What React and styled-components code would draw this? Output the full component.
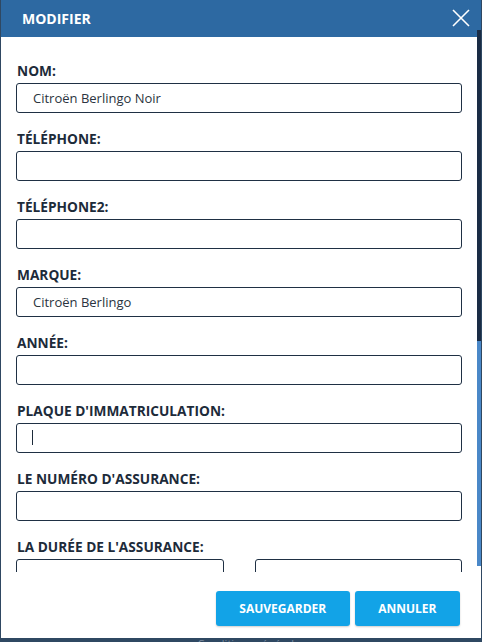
import React from "react";
import styled, { createGlobalStyle } from "styled-components";

const fields = [
  { label: "NOM:", value: "Citroën Berlingo Noir" },
  { label: "TÉLÉPHONE:", value: "" },
  { label: "TÉLÉPHONE2:", value: "" },
  { label: "MARQUE:", value: "Citroën Berlingo" },
  { label: "ANNÉE:", value: "" },
  { label: "PLAQUE D'IMMATRICULATION:", value: "", caret: true },
  { label: "LE NUMÉRO D'ASSURANCE:", value: "" },
];

const extraFields = ["KILOMÉTRAGE:", "COULEUR:", "CARBURANT:", "REMARQUE:"];

const App = () => {
  return (
    <>
      <GlobalStyle />
      <Page>
        <Modal>
          <Header>
            <Title>MODIFIER</Title>
            <CloseButton aria-label="close">
              <svg width="18" height="18" viewBox="0 0 18 18">
                <path d="M1 1L17 17M17 1L1 17" stroke="#fff" strokeWidth="1.6" fill="none" />
              </svg>
            </CloseButton>
          </Header>
          <BodyWrap>
            <Body>
              {fields.map((f) => (
                <Group key={f.label}>
                  <Label>{f.label}</Label>
                  <InputWrap>
                    <Input readOnly value={f.value} />
                    {f.caret && <Caret />}
                  </InputWrap>
                </Group>
              ))}
              <Group>
                <Label>LA DURÉE DE L'ASSURANCE:</Label>
                <Pair>
                  <Input readOnly value="" />
                  <Input readOnly value="" />
                </Pair>
              </Group>
              {extraFields.map((l) => (
                <Group key={l}>
                  <Label>{l}</Label>
                  <Input readOnly value="" />
                </Group>
              ))}
            </Body>
            <ScrollTrack>
              <ScrollThumb style={{ height: "58%" }} />
            </ScrollTrack>
          </BodyWrap>
          <Footer>
            <Button>SAUVEGARDER</Button>
            <Button>ANNULER</Button>
          </Footer>
        </Modal>
        <Backdrop>Conditions générales</Backdrop>
      </Page>
    </>
  );
};

const GlobalStyle = createGlobalStyle`
  html, body {
    margin: 0;
    padding: 0;
    background: #2f4862;
    font-family: "Open Sans", "Liberation Sans", sans-serif;
  }
  * { box-sizing: border-box; }
`;

const Page = styled.div`
  width: 482px;
  height: 642px;
  overflow: hidden;
  background: #2f4862;
  padding-left: 1px;
`;

const Modal = styled.div`
  width: 480px;
  height: 638px;
  display: flex;
  flex-direction: column;
  background: #fff;
`;

const Header = styled.div`
  height: 37px;
  flex-shrink: 0;
  background: #2d69a2;
  display: flex;
  align-items: center;
  justify-content: space-between;
  padding: 0 11px 0 21px;
`;

const Title = styled.div`
  color: #fff;
  font-weight: 700;
  font-size: 14px;
`;

const CloseButton = styled.div`
  width: 18px;
  height: 18px;
  display: flex;
  margin-top: -1px;
`;

const BodyWrap = styled.div`
  position: relative;
  flex: 1;
  min-height: 0;
`;

const Body = styled.div`
  height: 100%;
  overflow: hidden;
  padding: 25px 19px 0 15px;
`;

const ScrollTrack = styled.div`
  position: absolute;
  top: -7px;
  right: 0;
  bottom: 6px;
  width: 4px;
  background: #4a88c8;
`;

const ScrollThumb = styled.div`
  width: 100%;
  background: #1a2c45;
`;

const Group = styled.div`
  margin-bottom: 17px;
`;

const Label = styled.div`
  font-weight: 700;
  font-size: 13.7px;
  line-height: 18px;
  color: #1d2b3a;
  margin: 0 0 3px 1px;
`;

const InputWrap = styled.div`
  position: relative;
`;

const Input = styled.input`
  display: block;
  width: 100%;
  height: 30px;
  border: 1px solid #1f3044;
  border-radius: 3px;
  padding: 0 16px;
  font-family: "Open Sans", "Liberation Sans", sans-serif;
  font-size: 13px;
  color: #2b3440;
  background: #fff;
  outline: none;
`;

const Caret = styled.span`
  position: absolute;
  left: 16px;
  top: 7px;
  width: 1px;
  height: 15px;
  background: #1d2b3a;
`;

const Pair = styled.div`
  display: grid;
  grid-template-columns: 1fr 1fr;
  column-gap: 31px;
`;

const Footer = styled.div`
  height: 66px;
  flex-shrink: 0;
  display: flex;
  justify-content: flex-end;
  gap: 5px;
  padding: 19px 21px 0 0;
`;

const Button = styled.div`
  height: 35px;
  padding: 0 23.5px;
  display: flex;
  align-items: center;
  background: #12a3e7;
  color: #fff;
  font-weight: 700;
  font-size: 12px;
  border-radius: 3px;
  box-shadow: 0 1px 2px rgba(0, 0, 0, 0.2);
`;

const Backdrop = styled.div`
  text-align: center;
  color: #7d8da0;
  font-size: 11px;
  margin-top: -2px;
  padding-left: 20px;
`;

export default App;
